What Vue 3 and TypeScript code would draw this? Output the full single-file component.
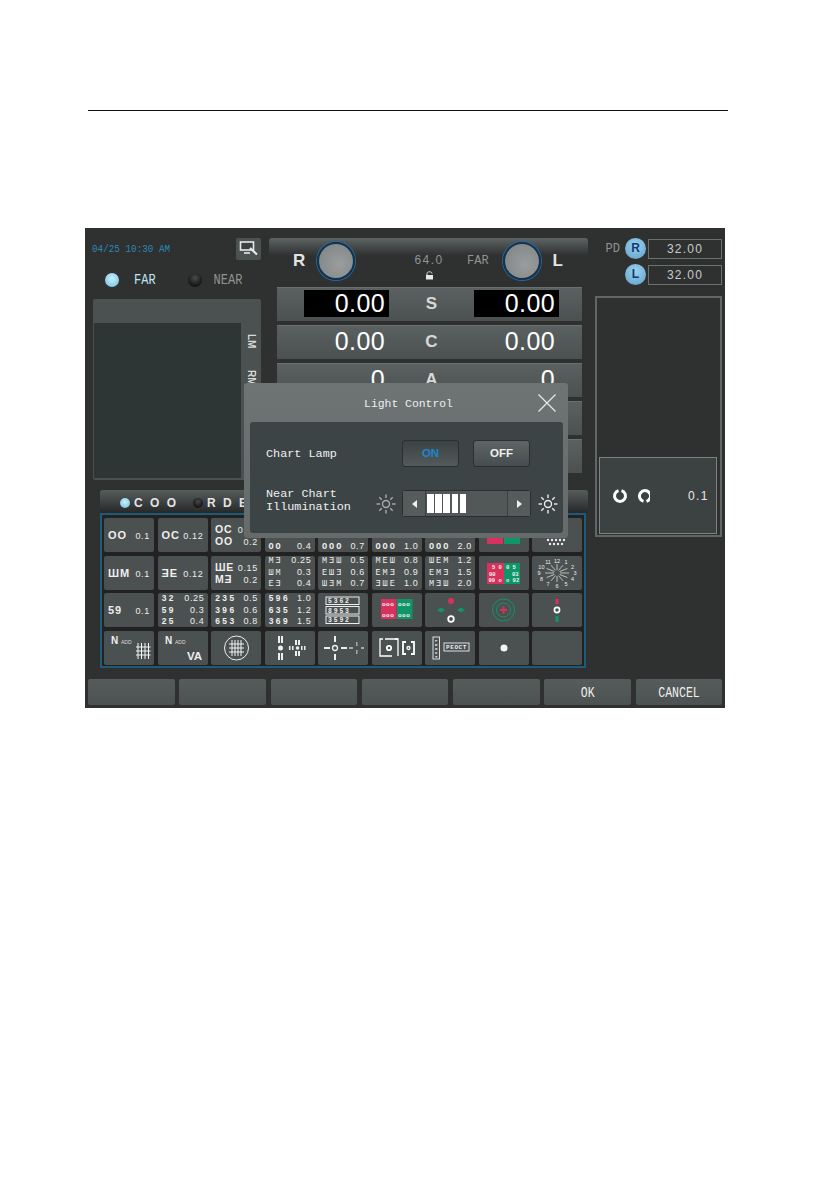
<script setup lang="ts">
interface Line { s: string; v: string }
interface Cell { kind: string; size?: string; lines?: Line[] }

const t = (size: string, ...pairs: [string, string][]): Cell => ({
  kind: 'text',
  size,
  lines: pairs.map(([s, v]) => ({ s, v })),
})

const cells: Cell[] = [
  t('one', ['OO', '0.1']),
  t('one', ['OC', '0.12']),
  t('two', ['OC', '0.15'], ['OO', '0.2']),
  t('three', ['OC', '0.25'], ['CO', '0.3'], ['OO', '0.4']),
  t('three', ['OCO', '0.5'], ['COO', '0.6'], ['OOO', '0.7']),
  t('three', ['OCO', '0.8'], ['COO', '0.9'], ['OOO', '1.0']),
  t('three', ['OCO', '1.2'], ['COO', '1.5'], ['OOO', '2.0']),
  { kind: 'rg0' },
  { kind: 'dots' },
  t('one', ['ШM', '0.1']),
  t('one', ['ƎE', '0.12']),
  t('two', ['ШE', '0.15'], ['MƎ', '0.2']),
  t('three thin', ['MƎ', '0.25'], ['ШM', '0.3'], ['EƎ', '0.4']),
  t('three thin', ['MƎШ', '0.5'], ['EШƎ', '0.6'], ['ШƎM', '0.7']),
  t('three thin', ['MEШ', '0.8'], ['EMƎ', '0.9'], ['ƎШE', '1.0']),
  t('three thin', ['ШEM', '1.2'], ['EMƎ', '1.5'], ['MƎШ', '2.0']),
  { kind: 'rg1' },
  { kind: 'dial' },
  t('one', ['59', '0.1']),
  t('three', ['32', '0.25'], ['59', '0.3'], ['25', '0.4']),
  t('three', ['235', '0.5'], ['396', '0.6'], ['653', '0.8']),
  t('three', ['596', '1.0'], ['635', '1.2'], ['369', '1.5']),
  { kind: 'boxed' },
  { kind: 'rg2' },
  { kind: 'diamond' },
  { kind: 'target' },
  { kind: 'fix' },
  { kind: 'add' },
  { kind: 'addva' },
  { kind: 'circle' },
  { kind: 'bars' },
  { kind: 'cross' },
  { kind: 'square' },
  { kind: 'peoct' },
  { kind: 'dot' },
  { kind: 'empty' },
]

const rows = [
  { label: 'S', value: '0.00', boxed: true },
  { label: 'C', value: '0.00', boxed: false },
  { label: 'A', value: '0', boxed: false },
  { label: '', value: '', boxed: false },
  { label: '', value: '', boxed: false },
]

const footer = ['', '', '', '', '', 'OK', 'CANCEL']

const dialNumbers = ['12', '1', '2', '3', '4', '5', '6', '7', '8', '9', '10', '11'].map((n, i) => {
  const a = ((i * 30 - 90) * Math.PI) / 180
  return {
    n,
    x: 25 + 18 * Math.cos(a),
    y: 17 + 12.5 * Math.sin(a),
    x1: 25 + 3 * Math.cos(a),
    y1: 17 + 3 * Math.sin(a),
    x2: 25 + 12 * Math.cos(a),
    y2: 17 + 9 * Math.sin(a),
  }
})

const sunRays = Array.from({ length: 8 }, (_, i) => {
  const a = (i * 45 * Math.PI) / 180
  return {
    x1: 10 + 6 * Math.cos(a),
    y1: 10 + 6 * Math.sin(a),
    x2: 10 + 9.5 * Math.cos(a),
    y2: 10 + 9.5 * Math.sin(a),
  }
})
</script>

<template>
  <div class="page">
    <div class="rule"></div>
    <div class="screen">
      <div class="main">
        <div class="left-block">
          <div class="upper">
            <div class="left-col">
              <div class="date-row">
                <span class="date">04/25 10:30 AM</span>
                <span class="tool-btn">
                  <svg width="20" height="18" viewBox="0 0 20 18">
                    <rect x="1.500" y="2" width="13" height="8" fill="#3c4243" stroke="#e8e8e8" stroke-width="1.600" />
                    <path d="M5 13h6" stroke="#e8e8e8" stroke-width="1.600" />
                    <path d="M11 8l7 6.500" stroke="#e8e8e8" stroke-width="2.200" />
                  </svg>
                </span>
              </div>
              <div class="mode-row">
                <span class="led on"></span>
                <span class="mode far">FAR</span>
                <span class="led off"></span>
                <span class="mode near">NEAR</span>
              </div>
              <div class="lm-panel">
                <div class="lm-head"></div>
                <div class="lm-body">
                  <div class="lm-screen"></div>
                  <div class="lm-strip">
                    <span>LM</span>
                    <span>RM</span>
                  </div>
                </div>
              </div>
            </div>
            <div class="center">
              <div class="head">
                <span class="eye">R</span>
                <span class="knob"></span>
                <span class="pd-info">
                  <span>64.0</span>
                  <svg width="9" height="9" viewBox="0 0 9 9">
                    <path d="M2 4V2.600C2 1.400 3 .8 4.500 .8S7 1.400 7 2.600" fill="none" stroke="#ddd" stroke-width="1" />
                    <rect x="1" y="4" width="7" height="4.500" fill="#e8e8e8" />
                  </svg>
                </span>
                <span class="far-label">FAR</span>
                <span class="knob"></span>
                <span class="eye eye-l">L</span>
              </div>
              <div class="rows">
                <div v-for="(r, i) in rows" :key="i" class="row">
                  <span class="value" :class="{ boxed: r.boxed }">{{ r.value }}</span>
                  <span class="row-label">{{ r.label }}</span>
                  <span class="value right" :class="{ boxed: r.boxed }">{{ r.value }}</span>
                </div>
              </div>
            </div>
          </div>

          <div class="chart-head">
            <span class="led tiny on"></span>
            <span class="chart-word">C O O</span>
            <span class="led tiny off"></span>
            <span class="chart-word">R D E</span>
          </div>
          <div class="chart">
            <div v-for="(c, i) in cells" :key="i" class="cell">
              <template v-if="c.kind === 'text'">
                <div class="lines" :class="c.size">
                  <div v-for="(l, j) in c.lines" :key="j" class="line">
                    <span class="sym">{{ l.s }}</span>
                    <span class="val">{{ l.v }}</span>
                  </div>
                </div>
              </template>
              <svg v-else viewBox="0 0 50 34" width="50" height="34" class="art">
                <g v-if="c.kind === 'rg0'">
                  <rect x="8" y="4" width="16" height="22" fill="#d8315b" />
                  <rect x="25" y="4" width="16" height="22" fill="#0f9668" />
                </g>
                <g v-else-if="c.kind === 'dots'" fill="#eee">
                  <circle v-for="n in 5" :key="n" :cx="12 + n * 4" cy="22" r="1.200" />
                  <circle v-for="n in 4" :key="n + 10" :cx="14 + n * 4" cy="26" r="1.200" />
                </g>
                <g v-else-if="c.kind === 'rg1'" font-family="'Liberation Mono', monospace" font-weight="700" font-size="5.500">
                  <rect x="8" y="7" width="17" height="21" fill="#d8315b" />
                  <rect x="25" y="7" width="16" height="21" fill="#0f9668" />
                  <g fill="#f3f3f3">
                    <text x="13" y="13">5 0</text>
                    <text x="10" y="19.500">00</text>
                    <text x="9.500" y="26">99 o</text>
                    <text x="27" y="13">0 5</text>
                    <text x="33" y="19.500">03</text>
                    <text x="27" y="26">o 92</text>
                  </g>
                </g>
                <g v-else-if="c.kind === 'dial'" stroke="#eee" stroke-width=".7">
                  <line v-for="d in dialNumbers" :key="d.n" :x1="d.x1" :y1="d.y1" :x2="d.x2" :y2="d.y2" />
                  <text v-for="d in dialNumbers" :key="'t' + d.n" :x="d.x" :y="d.y + 2" text-anchor="middle" font-family="'Liberation Sans', sans-serif" font-size="5.500" fill="#eee" stroke="none">{{ d.n }}</text>
                </g>
                <g v-else-if="c.kind === 'boxed'" font-family="'Liberation Mono', monospace" font-weight="700" font-size="6.500" letter-spacing="1.800" fill="#eee">
                  <g fill="none" stroke="#eee" stroke-width="1">
                    <rect x="8" y="4" width="33" height="7.500" />
                    <rect x="8" y="13.500" width="33" height="7.500" />
                    <rect x="8" y="23" width="33" height="7.500" />
                  </g>
                  <text x="10" y="10">5362</text>
                  <text x="10" y="19.500">8953</text>
                  <text x="10" y="29">3592</text>
                </g>
                <g v-else-if="c.kind === 'rg2'" font-family="'Liberation Mono', monospace" font-weight="700" font-size="6" letter-spacing=".5">
                  <rect x="9" y="6" width="15.500" height="20" fill="#d8315b" />
                  <rect x="25" y="6" width="15.500" height="20" fill="#0f9668" />
                  <g fill="#f3f3f3">
                    <text x="10" y="12.500">ooo</text>
                    <text x="26" y="12.500">ooo</text>
                    <text x="10" y="23.500">ooo</text>
                    <text x="26" y="23.500">ooo</text>
                  </g>
                </g>
                <g v-else-if="c.kind === 'diamond'">
                  <circle cx="26" cy="8" r="3" fill="#d8315b" />
                  <path d="M12 17l4-2.500 4 2.500-4 2.500zM32 17l4-2.500 4 2.500-4 2.500z" fill="#0f9668" />
                  <circle cx="26" cy="26" r="2.800" fill="none" stroke="#fff" stroke-width="1.800" />
                </g>
                <g v-else-if="c.kind === 'target'">
                  <circle cx="24.500" cy="17" r="11" fill="none" stroke="#0f9668" stroke-width="1" />
                  <circle cx="24.500" cy="17" r="7" fill="none" stroke="#0f9668" stroke-width="1" />
                  <path d="M21 17h7M24.500 13.500v7" stroke="#d8315b" stroke-width="2" />
                </g>
                <g v-else-if="c.kind === 'fix'">
                  <rect x="23.500" y="6" width="3" height="5" fill="#d8315b" />
                  <circle cx="25" cy="17" r="2.600" fill="none" stroke="#fff" stroke-width="1.600" />
                  <rect x="23.500" y="23" width="3" height="6" fill="#0f9668" />
                </g>
                <g v-else-if="c.kind === 'add'">
                  <text x="7" y="13" font-family="'Liberation Sans', sans-serif" font-weight="700" font-size="10" fill="#eee">N</text>
                  <text x="17" y="13" font-family="'Liberation Sans', sans-serif" font-size="5" fill="#ddd">ADD</text>
                  <path d="M34 12v16M37.500 12v16M41 12v16M44.500 12v16M32 16h14.500M32 20h14.500M32 24h14.500" stroke="#f4f4f4" stroke-width="1" />
                </g>
                <g v-else-if="c.kind === 'addva'">
                  <text x="7" y="13" font-family="'Liberation Sans', sans-serif" font-weight="700" font-size="10" fill="#eee">N</text>
                  <text x="17" y="13" font-family="'Liberation Sans', sans-serif" font-size="5" fill="#ddd">ADD</text>
                  <text x="29" y="29" font-family="'Liberation Sans', sans-serif" font-weight="700" font-size="11.500" fill="#eee">VA</text>
                </g>
                <g v-else-if="c.kind === 'circle'">
                  <circle cx="25.500" cy="17" r="12" fill="none" stroke="#eee" stroke-width="1" />
                  <path d="M21 9v16M24 9v16M27 9v16M30 9v16M18 13h15M18 17h15M18 21h15" stroke="#f4f4f4" stroke-width="1" />
                </g>
                <g v-else-if="c.kind === 'bars'" fill="#eee">
                  <rect x="13" y="5" width="2" height="7" /><rect x="16" y="5" width="2" height="7" />
                  <circle cx="15.500" cy="17" r="2.500" />
                  <rect x="13" y="22" width="2" height="7" /><rect x="16" y="22" width="2" height="7" />
                  <rect x="30" y="9" width="2" height="5" /><rect x="33" y="9" width="2" height="5" />
                  <rect x="24" y="15" width="1.500" height="4" /><rect x="27" y="15" width="1.500" height="4" />
                  <circle cx="32.500" cy="17" r="1.800" />
                  <rect x="36" y="15" width="1.500" height="4" /><rect x="39" y="15" width="1.500" height="4" />
                  <rect x="30" y="20" width="2" height="5" /><rect x="33" y="20" width="2" height="5" />
                </g>
                <g v-else-if="c.kind === 'cross'" fill="#eee">
                  <rect x="6" y="16" width="6" height="2" />
                  <circle cx="17" cy="17" r="2.500" fill="none" stroke="#eee" stroke-width="1.300" />
                  <rect x="16" y="5" width="2" height="6" /><rect x="16" y="23" width="2" height="6" />
                  <rect x="23" y="16" width="6" height="2" />
                  <rect x="31" y="16" width="4" height="2" fill="#aaa" />
                  <rect x="38" y="11" width="1.500" height="4" fill="#aaa" /><rect x="38" y="19" width="1.500" height="4" fill="#aaa" />
                  <rect x="43" y="16" width="3" height="2" fill="#aaa" />
                </g>
                <g v-else-if="c.kind === 'square'" fill="none" stroke="#fff">
                  <path d="M11 8H8v17h12M23 8h3v17" stroke-width="1.300" />
                  <path d="M13 8h13" stroke-width="1.300" />
                  <circle cx="17" cy="17" r="2.200" stroke-width="1.800" />
                  <path d="M34 11h-3v12h3M39 11h3v12h-3" stroke-width="1.800" />
                  <circle cx="36.500" cy="17" r="1.500" stroke-width="1.300" />
                </g>
                <g v-else-if="c.kind === 'peoct'" font-family="'Liberation Mono', monospace" font-weight="700" fill="#eee">
                  <rect x="8" y="6" width="6.500" height="22" fill="none" stroke="#eee" stroke-width=".9" />
                  <text x="11.200" y="11" font-size="4.200" text-anchor="middle">P</text>
                  <text x="11.200" y="15" font-size="4.200" text-anchor="middle">E</text>
                  <text x="11.200" y="19" font-size="4.200" text-anchor="middle">O</text>
                  <text x="11.200" y="23" font-size="4.200" text-anchor="middle">C</text>
                  <text x="11.200" y="27" font-size="4.200" text-anchor="middle">T</text>
                  <rect x="19" y="12" width="25" height="8" fill="none" stroke="#eee" stroke-width=".9" />
                  <text x="31.500" y="18.300" font-size="6" text-anchor="middle" letter-spacing=".6">PEOCT</text>
                </g>
                <circle v-else-if="c.kind === 'dot'" cx="25" cy="17" r="3.500" fill="#f4f4f4" />
              </svg>
            </div>
          </div>
        </div>

        <div class="right-col">
          <div class="pd-row">
            <span class="pd-text">PD</span>
            <span class="badge">R</span>
            <span class="pd-box">32.00</span>
          </div>
          <div class="pd-row second">
            <span class="badge">L</span>
            <span class="pd-box">32.00</span>
          </div>
          <div class="preview">
            <div class="preview-box">
              <svg width="38" height="16" viewBox="0 0 38 16" fill="none" stroke="#fff" stroke-width="3">
                <path d="M6.500 2.600A5.500 5.500 0 1 0 9.500 2.600" />
                <path d="M31.500 13.400A5.500 5.500 0 1 1 34.500 13.400" />
              </svg>
              <span class="preview-val">0.1</span>
            </div>
          </div>
        </div>
      </div>

      <div class="footer">
        <button v-for="(f, i) in footer" :key="i" class="foot-btn"><span>{{ f }}</span></button>
      </div>

      <div class="modal">
        <div class="modal-title">
          <span>Light Control</span>
          <svg class="close" width="20" height="20" viewBox="0 0 20 20">
            <path d="M1.500 1.500l17 17M18.500 1.500l-17 17" stroke="#e6e9e9" stroke-width="1.200" fill="none" />
          </svg>
        </div>
        <div class="modal-body">
          <div class="m-row">
            <span class="m-label lamp">Chart Lamp</span>
            <span class="m-btn active">ON</span>
            <span class="m-btn">OFF</span>
          </div>
          <div class="m-row second">
            <span class="m-label near-label">Near Chart<br />Illumination</span>
            <svg width="20" height="20" viewBox="0 0 20 20" class="sun">
              <circle cx="10" cy="10" r="3.500" fill="none" stroke="#a9adac" stroke-width="1.400" />
              <line v-for="(r, i) in sunRays" :key="i" :x1="r.x1" :y1="r.y1" :x2="r.x2" :y2="r.y2" stroke="#a9adac" stroke-width="1.400" />
            </svg>
            <div class="slider">
              <span class="arrow"><b class="tri left"></b></span>
              <span class="track"><i v-for="n in 5" :key="n"></i></span>
              <span class="arrow end"><b class="tri right"></b></span>
            </div>
            <svg width="20" height="20" viewBox="0 0 20 20" class="sun">
              <circle cx="10" cy="10" r="3.500" fill="none" stroke="#eceeee" stroke-width="1.400" />
              <line v-for="(r, i) in sunRays" :key="i" :x1="r.x1" :y1="r.y1" :x2="r.x2" :y2="r.y2" stroke="#eceeee" stroke-width="1.400" />
            </svg>
          </div>
        </div>
      </div>
    </div>
  </div>
</template>

<style scoped>
.page {
  width: 839px;
  height: 1191px;
  background: #fff;
  padding-top: 110px;
  box-sizing: border-box;
  overflow: hidden;
  font-family: "Liberation Sans", sans-serif;
}
.rule {
  width: 640px;
  height: 1px;
  margin-left: 88px;
  background: #111;
}
.screen {
  position: relative;
  width: 640px;
  height: 480px;
  margin: 117px 0 0 85px;
  background: #2f3030;
  padding-top: 10px;
  box-sizing: border-box;
}
.main {
  display: flex;
  height: 434px;
}
.left-block {
  width: 505px;
  flex: none;
}
.upper {
  display: flex;
  height: 252px;
  padding-left: 8px;
  gap: 8px;
}
.left-col {
  width: 168px;
}
.date-row {
  display: flex;
  align-items: center;
  justify-content: space-between;
  height: 22px;
}
.date {
  font-family: "Liberation Mono", monospace;
  font-size: 9.300px;
  margin-left: -1px;
  color: #2b87b8;
  transform: scaleY(1.200);
}
.tool-btn {
  width: 25px;
  height: 22px;
  background: #4c5252;
  border-radius: 2px;
  display: flex;
  align-items: center;
  justify-content: center;
}
.mode-row {
  display: flex;
  align-items: center;
  height: 20px;
  margin-top: 10px;
  padding-left: 12px;
}
.led {
  width: 14px;
  height: 14px;
  border-radius: 50%;
  flex: none;
}
.led.on {
  background: radial-gradient(circle at 50% 40%, #cdf0fb, #86cbe8 70%, #3f8fb0);
}
.led.off {
  background: radial-gradient(circle at 50% 35%, #4a4a4a, #151515 70%);
}
.mode {
  font-family: "Liberation Mono", monospace;
  font-size: 12px;
  transform: scaleY(1.200);
}
.mode.far {
  color: #bfe6f4;
  margin: 0 32px 0 15px;
}
.mode.near {
  color: #8f9493;
  margin-left: 12px;
}
.lm-panel {
  margin-top: 9px;
  height: 181px;
  background: #4b5150;
  border-radius: 2px;
}
.lm-head {
  height: 24px;
}
.lm-body {
  display: flex;
  height: 157px;
}
.lm-screen {
  width: 147px;
  height: 155px;
  margin-left: 1px;
  background: #2e3635;
}
.lm-strip {
  flex: 1;
  display: flex;
  flex-direction: column;
  align-items: center;
  gap: 22px;
  padding-top: 11px;
  font-family: "Liberation Sans", sans-serif;
  font-weight: 700;
  font-size: 10px;
  color: #d8d8d8;
}
.lm-strip span {
  writing-mode: vertical-rl;
}
.center {
  width: 319px;
}
.head {
  height: 45px;
  display: flex;
  align-items: center;
  padding: 0 0 0 24px;
  box-sizing: border-box;
  background: linear-gradient(#5d6363 0, #3a3d3d 13px, #2f3030 18px);
  border-radius: 3px 3px 0 0;
}
.eye {
  width: 24px;
  font-weight: 700;
  font-size: 17px;
  color: #e4e4e4;
}
.eye-l {
  width: auto;
  margin-left: 12px;
}
.knob {
  width: 34px;
  height: 34px;
  flex: none;
  border-radius: 50%;
  background: radial-gradient(circle at 60% 60%, #9a9d9d, #7d8283);
  border: 2px solid #16324c;
  box-shadow: 0 0 0 1px #24689c;
}
.pd-info {
  display: flex;
  flex-direction: column;
  align-items: center;
  margin-left: 58px;
  width: 32px;
  gap: 4px;
  padding-top: 12px;
  font-size: 12px;
  letter-spacing: 1.400px;
  color: #8f9493;
}
.far-label {
  margin: 0 14px 0 22px;
  font-family: "Liberation Mono", monospace;
  font-size: 12px;
  color: #8f9493;
}
.rows {
  margin: 4px 6px 0 8px;
  display: flex;
  flex-direction: column;
  gap: 4px;
}
.row {
  height: 34px;
  display: grid;
  grid-template-columns: 112px 85px 108px;
  background: linear-gradient(#5b6161, #4b5150);
  border-top: 1px solid #6a6f6f;
  box-sizing: border-box;
}
.row-label {
  font-weight: 700;
  font-size: 17px;
  color: #d8d8d8;
  text-align: center;
  line-height: 32px;
}
.value {
  width: 85px;
  height: 27px;
  margin: 2px 0 0 27px;
  color: #fff;
  text-align: right;
  font-size: 25px;
  letter-spacing: .4px;
  line-height: 27px;
  padding-right: 4px;
  box-sizing: border-box;
}
.value.right {
  margin-left: 0;
}
.value.boxed {
  background: #000;
}
.chart-head {
  height: 23px;
  margin-left: 15px;
  width: 488px;
  display: flex;
  align-items: center;
  padding: 2px 0 0 20px;
  box-sizing: border-box;
  background: linear-gradient(#565c5c, #272828);
  border-radius: 3px 3px 0 0;
}
.led.tiny {
  width: 10px;
  height: 10px;
}
.chart-word {
  font-weight: 700;
  font-size: 12px;
  letter-spacing: 2px;
  color: #e4e4e4;
  margin: 0 15px 0 4px;
}
.chart {
  margin-left: 15px;
  width: 486px;
  height: 155px;
  box-sizing: border-box;
  border: 2px solid #1f5a78;
  padding: 3px 2px;
  background: #222;
  display: grid;
  grid-template-columns: repeat(9, 50px);
  grid-template-rows: repeat(4, 34px);
  column-gap: 3.500px;
  row-gap: 3.700px;
}
.cell {
  background: #4b5150;
  border-radius: 2px;
  overflow: hidden;
  display: flex;
  align-items: center;
}
.art {
  display: block;
}
.lines {
  width: 100%;
  padding: 0 3px 0 4px;
  box-sizing: border-box;
  color: #eee;
  font-family: "Liberation Mono", monospace;
}
.line {
  display: flex;
  justify-content: space-between;
  align-items: baseline;
}
.val {
  font-family: "Liberation Sans", sans-serif;
  font-size: 9px;
  letter-spacing: .7px;
}
.sym {
  font-family: "Liberation Sans", sans-serif;
  font-weight: 700;
}
.one .sym {
  font-size: 11px;
  letter-spacing: 1px;
}
.one .line {
  padding-right: 1px;
}
.two .sym {
  font-size: 10.500px;
  letter-spacing: .8px;
  line-height: 12px;
}
.three .line {
  line-height: 10.500px;
}
.three .sym {
  font-family: "Liberation Mono", monospace;
  font-size: 8.500px;
  letter-spacing: 2px;
}
.three.thin .sym {
  font-weight: 400;
}
.right-col {
  margin-left: 5px;
  width: 127px;
}
.pd-row {
  display: flex;
  align-items: center;
  height: 21px;
  justify-content: flex-end;
  gap: 2px;
}
.pd-row.second {
  margin-top: 5px;
}
.pd-text {
  font-family: "Liberation Mono", monospace;
  font-size: 12px;
  color: #8f9493;
  margin-right: 3px;
}
.badge {
  width: 21px;
  height: 21px;
  border-radius: 50%;
  background: radial-gradient(circle at 50% 35%, #9bd2ee, #5e9fca);
  color: #123a6e;
  font-weight: 700;
  font-size: 12px;
  text-align: center;
  line-height: 21px;
}
.pd-box {
  width: 74px;
  height: 20px;
  box-sizing: border-box;
  border: 1px solid #6a6f6f;
  font-size: 12px;
  letter-spacing: 1.200px;
  line-height: 18px;
  color: #c8cccc;
  text-align: center;
}
.preview {
  margin-top: 11px;
  height: 241px;
  box-sizing: border-box;
  border: 2px solid #626766;
  padding: 159px 3px 3px 2px;
  background: #2f3030;
}
.preview-box {
  height: 75px;
  border: 1px solid #7d8282;
  background: #3c4241;
  display: flex;
  align-items: center;
  padding-left: 12px;
}
.preview-val {
  margin-left: 38px;
  color: #e8e8e8;
  font-size: 12px;
  letter-spacing: 1.400px;
}
.footer {
  display: flex;
  gap: 4.800px;
  margin-top: 7px;
  padding-left: 3px;
}
.foot-btn {
  width: 86.500px;
  height: 26px;
  padding: 0;
  border: 0;
  border-radius: 2px;
  background: linear-gradient(#565c5b, #4c5251);
  color: #f0f0f0;
  font-family: "Liberation Mono", monospace;
  font-size: 11.500px;
}
.foot-btn span {
  display: inline-block;
  transform: scaleY(1.250);
}
.modal {
  position: absolute;
  left: 159px;
  top: 155px;
  width: 324px;
  height: 155px;
  background: linear-gradient(#6e7474, #656b6b);
  border-radius: 3px;
  padding: 0 5px 5px 6px;
  box-sizing: border-box;
  font-family: "Liberation Mono", monospace;
}
.modal-title {
  position: relative;
  height: 39px;
  display: flex;
  align-items: center;
  justify-content: center;
  padding: 3px 0 0 4px;
  box-sizing: border-box;
  font-size: 11.400px;
  color: #ecefef;
}
.close {
  position: absolute;
  right: 6px;
  top: 10px;
}
.modal-body {
  height: 111px;
  background: #3c4445;
  border-radius: 3px;
  padding: 18px 0 0 16px;
  box-sizing: border-box;
}
.m-row {
  display: flex;
  align-items: center;
  height: 27px;
  color: #f0f0f0;
  font-size: 11.800px;
}
.m-row.second {
  margin-top: 23px;
}
.m-label {
  flex: none;
}
.lamp {
  width: 136px;
}
.near-label {
  width: 110px;
  line-height: 13px;
  margin-top: -6px;
}
.sun {
  flex: none;
  margin-right: 6px;
}
.m-btn {
  width: 57px;
  height: 27px;
  margin-right: 14px;
  background: linear-gradient(#5f6565, #474d4e);
  border: 1px solid #2a2f30;
  border-radius: 3px;
  box-sizing: border-box;
  text-align: center;
  font-family: "Liberation Sans", sans-serif;
  font-weight: 700;
  font-size: 11.500px;
  line-height: 24px;
}
.m-btn.active {
  background: linear-gradient(#3b4244, #535a5c);
  color: #1b86cf;
}
.slider {
  width: 129px;
  height: 27px;
  flex: none;
  margin-right: 7px;
  display: flex;
  background: #525858;
  border: 1px solid #2a2f30;
  border-radius: 3px;
  box-sizing: border-box;
}
.arrow {
  width: 23px;
  flex: none;
  display: flex;
  align-items: center;
  justify-content: center;
  background: #565c5c;
  border-right: 1px solid #3a4040;
  box-sizing: border-box;
}
.arrow.end {
  border-right: 0;
  border-left: 1px solid #3a4040;
}
.tri {
  width: 0;
  height: 0;
  border-top: 4px solid transparent;
  border-bottom: 4px solid transparent;
}
.tri.left {
  border-right: 5px solid #f0f0f0;
}
.tri.right {
  border-left: 5px solid #f0f0f0;
}
.track {
  flex: 1;
  display: flex;
  gap: 1.700px;
  padding: 3px 0 3px 1px;
  box-sizing: border-box;
}
.track i {
  width: 6.500px;
  background: #fff;
}
</style>
